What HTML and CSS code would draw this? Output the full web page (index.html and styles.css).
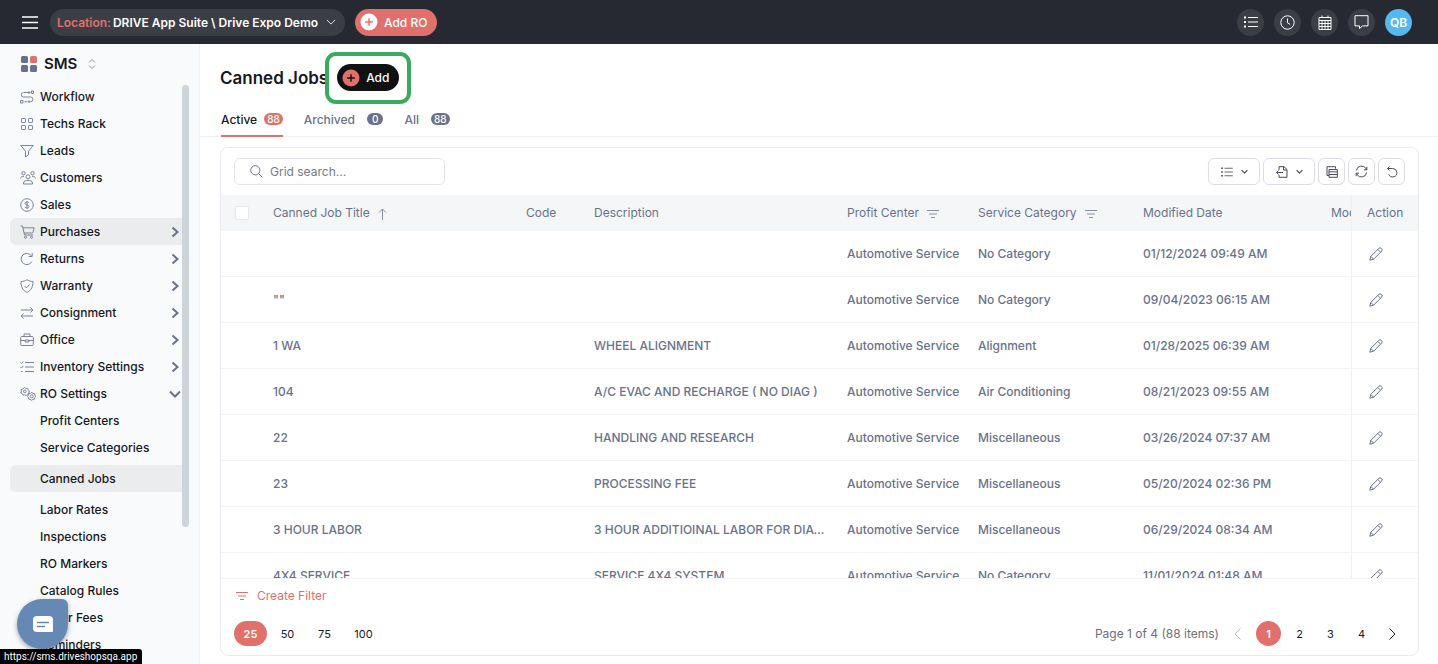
FILE: index.html
```html
<!DOCTYPE html>
<html lang="en">
<head>
    <meta charset="UTF-8">
    <meta name="viewport" content="width=device-width, initial-scale=1.0">
    <title>Canned Jobs</title>
    <link rel="stylesheet" href="styles.css">
</head>
<body>
    <!-- icons used more than once -->
    <svg class="sprite" width="0" height="0">
        <symbol id="right" viewBox="0 0 12 12"><path d="M3.500 1.500L8.500 6l-5 4.500"/></symbol>
        <symbol id="down" viewBox="0 0 12 12"><path d="M1 3.500L6 8.500l5-5"/></symbol>
        <symbol id="filter" viewBox="0 0 12 12"><path d="M0 2.500h12M2 6h8M4 9.500h4"/></symbol>
        <symbol id="list" viewBox="0 0 14 12"><path d="M4 1.500h10M4 6h10M4 10.500h10"/><path stroke-width="2" d="M0 1.500h2M0 6h2M0 10.500h2"/></symbol>
        <symbol id="pencil" viewBox="0 0 14 14"><path d="M.8 13.200l1-3.800L9.900 1.300a1.600 1.600 0 0 1 2.300 0l.5.500a1.600 1.600 0 0 1 0 2.300l-8.100 8.100zM8.800 2.400l2.800 2.800M1.800 9.400l2.800 2.800"/></symbol>
    </svg>

    <header class="topbar">
        <button class="menu-btn" aria-label="Menu"><svg width="16" height="13" viewBox="0 0 16 13"><path d="M0 1h16M0 6.500h16M0 12h16"/></svg></button>
        <button class="location"><span>Location:</span> DRIVE App Suite \ Drive Expo Demo <svg width="10" height="10"><use href="#down"/></svg></button>
        <button class="pill add-ro"><svg width="18" height="18" viewBox="0 0 18 18"><circle cx="9" cy="9" r="8.500"/><path d="M9 5.200v7.600M5.200 9h7.600"/></svg>Add RO</button>
        <div class="top-icons">
            <button class="round" aria-label="List"><svg width="14" height="12"><use href="#list"/></svg></button>
            <button class="round" aria-label="Clock"><svg width="15" height="15" viewBox="0 0 15 15"><circle cx="7.500" cy="7.500" r="6.700"/><path d="M7.500 3.500v4.300l2.600 1.600"/></svg></button>
            <button class="round" aria-label="Calendar"><svg width="14" height="15" viewBox="0 0 14 15"><path d="M1 2.500h12v12H1zM1 5.500h12M1 8.500h12M1 11.500h12M4 5.500v9M7 5.500v9M10 5.500v9M4 .5v2M10 .5v2"/></svg></button>
            <button class="round" aria-label="Messages"><svg width="15" height="14" viewBox="0 0 15 14"><path d="M1 .7h13v10.200H8.500l-3 2.600v-2.600H1z"/></svg></button>
            <button class="round avatar">QB</button>
        </div>
    </header>

    <div class="layout">
        <aside class="sidebar">
            <button class="app-switch">
                <svg class="app-logo" width="16" height="16" viewBox="0 0 16 16"><rect width="7" height="7" rx="1.500"/><rect class="red" x="9" width="7" height="7" rx="1.500"/><rect y="9" width="7" height="7" rx="1.500"/><rect x="9" y="9" width="7" height="7" rx="1.500"/></svg>
                SMS
                <svg class="sort" width="8" height="10" viewBox="0 0 8 10"><path d="M1 3.500l3-3 3 3M1 6.500l3 3 3-3"/></svg>
            </button>
            <div class="nav-scroll">
                <nav>
                    <a href="#"><svg width="14" height="14" viewBox="0 0 14 14"><path d="M4 2.500h6M8.500 1l1.500 1.500L8.500 4M11.500 1h2v2.500h-2zM3.500 2.500a2.200 2.200 0 0 0 0 4.500h7a2.200 2.200 0 0 1 0 4.700H8M9 10.500v2.500M.5 10.500H3V13H.5zM4.500 11.700h3"/></svg>Workflow</a>
                    <a href="#"><svg width="14" height="14" viewBox="0 0 14 14"><rect x="1.500" y="1.500" width="4" height="4" rx=".6"/><rect x="8.500" y="1.500" width="4" height="4" rx=".6"/><rect x="1.500" y="8.500" width="4" height="4" rx=".6"/><rect x="8.500" y="8.500" width="4" height="4" rx=".6"/></svg>Techs Rack</a>
                    <a href="#"><svg width="14" height="14" viewBox="0 0 14 14"><path d="M.8 1.500h12.400L8.500 7.300v3.400l-3 2.300V7.300z"/></svg>Leads</a>
                    <a href="#"><svg width="16" height="14" viewBox="0 0 16 14"><circle cx="8" cy="5.800" r="2"/><circle cx="3.500" cy="2.200" r="1.700"/><circle cx="12.500" cy="2.200" r="1.700"/><path d="M3.500 13v-1a3 3 0 0 1 3-2.500h3a3 3 0 0 1 3 2.500v1zM.5 7.500a2.500 2.500 0 0 1 3.500-2M15.500 7.500a2.500 2.500 0 0 0-3.500-2"/></svg>Customers</a>
                    <a href="#"><svg width="14" height="14" viewBox="0 0 14 14"><circle cx="7" cy="7" r="6.300"/><path d="M9 5.200C8.700 4.300 7.900 4 7 4c-1.100 0-2 .5-2 1.400C5 7.500 9 6.400 9 8.600 9 9.500 8.100 10 7 10s-1.800-.4-2.100-1.200M7 3v8"/></svg>Sales</a>
                    <a href="#" class="current"><svg width="15" height="14" viewBox="0 0 15 14"><path d="M.5 1h2l2 9h8.500M2.800 2.800h11.400l-1.500 5.200H4"/><circle cx="5.500" cy="12.300" r="1"/><circle cx="11.500" cy="12.300" r="1"/></svg>Purchases<svg class="arrow" width="12" height="12"><use href="#right"/></svg></a>
                    <a href="#"><svg width="14" height="14" viewBox="0 0 14 14"><path d="M11.800 9.500A5.600 5.600 0 1 1 11.500 4M12.200 1v3.500H8.700"/></svg>Returns<svg class="arrow" width="12" height="12"><use href="#right"/></svg></a>
                    <a href="#"><svg width="14" height="14" viewBox="0 0 14 14"><path d="M7 .7c2 1.300 3.800 1.700 6 1.800.1 4.700-1.500 8.800-6 10.900C2.500 11.300.9 7.200 1 2.500 3.200 2.400 5 2 7 .7zM4.500 7l1.900 1.900 3.400-3.600"/></svg>Warranty<svg class="arrow" width="12" height="12"><use href="#right"/></svg></a>
                    <a href="#"><svg width="14" height="14" viewBox="0 0 14 14"><path d="M1 4h12M10.500 1.500L13 4l-2.500 2.500M13 10H1M3.500 7.500L1 10l2.500 2.500"/></svg>Consignment<svg class="arrow" width="12" height="12"><use href="#right"/></svg></a>
                    <a href="#"><svg width="14" height="14" viewBox="0 0 14 14"><rect x=".7" y="3.500" width="12.600" height="9" rx="1"/><path d="M4 3.500V1h6v2.500M.7 7.500h4.500M8.800 7.500h4.500M5.200 7v2h3.600V7z"/></svg>Office<svg class="arrow" width="12" height="12"><use href="#right"/></svg></a>
                    <a href="#"><svg width="14" height="14" viewBox="0 0 14 14"><path d="M5 2.500h9M5 7h9M5 11.500h9M.5 2.500l1 1 1.800-2M.5 7l1 1 1.800-2M1 11.500h1.500"/></svg>Inventory Settings<svg class="arrow" width="12" height="12"><use href="#right"/></svg></a>
                    <a href="#"><svg width="16" height="14" viewBox="0 0 16 14"><path d="M4.500.5l1.300 1 1.700-.2.600 1.500 1.300 1-.6 1.400.1 1.600-1.600.5-1 1.200-1.600-.7-1.600.3-.8-1.400L.8 5.900l.5-1.600-.3-1.600 1.600-.6z"/><circle cx="4.800" cy="4.300" r="1.300"/><path d="M11.500 5.500l1.500.8 1.600.1.200 1.600 1 1.300-1 1.300-.3 1.600-1.600.2-1.400.9-1.300-1-1.600-.2-.2-1.600-.9-1.300 1-1.300.2-1.500 1.600-.1z"/><circle cx="11.700" cy="9.300" r="1.500"/></svg>RO Settings<svg class="arrow" width="12" height="12"><use href="#down"/></svg></a>
                    <div class="subnav">
                        <a href="#">Profit Centers</a>
                        <a href="#">Service Categories</a>
                        <a href="#" class="current">Canned Jobs</a>
                        <a href="#">Labor Rates</a>
                        <a href="#">Inspections</a>
                        <a href="#">RO Markers</a>
                        <a href="#">Catalog Rules</a>
                        <a href="#">Order Fees</a>
                        <a href="#">Reminders</a>
                    </div>
                </nav>
                <div class="thumb"></div>
            </div>
        </aside>

        <main>
            <div class="page-head">
                <h1>Canned Jobs</h1>
                <div class="highlight"><button class="pill add"><svg width="18" height="18" viewBox="0 0 18 18"><circle cx="9" cy="9" r="8.500"/><path d="M9 5.200v7.600M5.200 9h7.600"/></svg>Add</button></div>
            </div>
            <div class="tabs">
                <button class="tab active">Active <span>88</span></button>
                <button class="tab archived">Archived <span>0</span></button>
                <button class="tab all">All <span>88</span></button>
            </div>

            <section class="card">
                <div class="toolbar">
                    <label class="search">
                        <svg width="13" height="13" viewBox="0 0 13 13"><circle cx="5.300" cy="5.300" r="4.600"/><path d="M8.700 8.700l3.800 3.800"/></svg>
                        <input type="text" placeholder="Grid search..." aria-label="Grid search">
                    </label>
                    <div class="tools">
                        <button class="wide" aria-label="Layout"><svg width="12" height="10"><use href="#list"/></svg><svg class="caret" width="7" height="7"><use href="#down"/></svg></button>
                        <button class="wide" aria-label="Export"><svg width="12" height="12" viewBox="0 0 12 12"><path d="M3 4V.7h5L11 3.500v7.800H3V9M7.500.7V4H11M7 6.500H.5M2.500 4.500l-2 2 2 2"/></svg><svg class="caret" width="7" height="7"><use href="#down"/></svg></button>
                        <button aria-label="Columns"><svg width="12" height="12" viewBox="0 0 12 12"><path d="M3 9.500H1V.7h8.500v2M3 3.500h8.300v7.800H3zM3 5.800h8.300M3 8.500h8.300"/></svg></button>
                        <button aria-label="Refresh"><svg width="13" height="13" viewBox="0 0 13 13"><path d="M1.300 5.500A5.300 5.300 0 0 1 11 3.500l.7 1.300M11.900 1.800v3H9M11.700 7.500A5.300 5.300 0 0 1 2 9.500l-.7-1.300M1.100 11.200v-3H4"/></svg></button>
                        <button aria-label="Reset"><svg width="12" height="12" viewBox="0 0 12 12"><path d="M1.500 2.500h5.200a4.200 4.200 0 1 1-3.900 5.800M3.500.5l-2 2 2 2"/></svg></button>
                    </div>
                </div>

                <div class="grid">
                    <table>
                        <colgroup>
                            <col class="c-check"><col><col class="c-code"><col><col class="c-profit"><col class="c-category"><col class="c-date"><col class="c-by"><col class="c-action">
                        </colgroup>
                        <thead>
                            <tr>
                                <th class="check"><input type="checkbox" aria-label="Select all"></th>
                                <th>Canned Job Title <svg class="sorted" width="9" height="12" viewBox="0 0 9 12"><path d="M4.500 12V1M1 4.500L4.500 1 8 4.500"/></svg></th>
                                <th>Code</th>
                                <th>Description</th>
                                <th>Profit Center <svg width="12" height="12"><use href="#filter"/></svg></th>
                                <th>Service Category <svg width="12" height="12"><use href="#filter"/></svg></th>
                                <th>Modified Date</th>
                                <th class="by">Modified By</th>
                                <th class="action">Action</th>
                            </tr>
                        </thead>
                        <tbody>
                            <tr><td></td><td></td><td></td><td></td><td>Automotive Service</td><td>No Category</td><td>01/12/2024 09:49 AM</td><td></td><td class="action"><button aria-label="Edit"><svg width="14" height="14"><use href="#pencil"/></svg></button></td></tr>
                            <tr><td></td><td>""</td><td></td><td></td><td>Automotive Service</td><td>No Category</td><td>09/04/2023 06:15 AM</td><td></td><td class="action"><button aria-label="Edit"><svg width="14" height="14"><use href="#pencil"/></svg></button></td></tr>
                            <tr><td></td><td>1 WA</td><td></td><td>WHEEL ALIGNMENT</td><td>Automotive Service</td><td>Alignment</td><td>01/28/2025 06:39 AM</td><td></td><td class="action"><button aria-label="Edit"><svg width="14" height="14"><use href="#pencil"/></svg></button></td></tr>
                            <tr><td></td><td>104</td><td></td><td>A/C EVAC AND RECHARGE ( NO DIAG )</td><td>Automotive Service</td><td>Air Conditioning</td><td>08/21/2023 09:55 AM</td><td></td><td class="action"><button aria-label="Edit"><svg width="14" height="14"><use href="#pencil"/></svg></button></td></tr>
                            <tr><td></td><td>22</td><td></td><td>HANDLING AND RESEARCH</td><td>Automotive Service</td><td>Miscellaneous</td><td>03/26/2024 07:37 AM</td><td></td><td class="action"><button aria-label="Edit"><svg width="14" height="14"><use href="#pencil"/></svg></button></td></tr>
                            <tr><td></td><td>23</td><td></td><td>PROCESSING FEE</td><td>Automotive Service</td><td>Miscellaneous</td><td>05/20/2024 02:36 PM</td><td></td><td class="action"><button aria-label="Edit"><svg width="14" height="14"><use href="#pencil"/></svg></button></td></tr>
                            <tr><td></td><td>3 HOUR LABOR</td><td></td><td>3 HOUR ADDITIOINAL LABOR FOR DIAGNOSTICS</td><td>Automotive Service</td><td>Miscellaneous</td><td>06/29/2024 08:34 AM</td><td></td><td class="action"><button aria-label="Edit"><svg width="14" height="14"><use href="#pencil"/></svg></button></td></tr>
                            <tr><td></td><td>4X4 SERVICE</td><td></td><td>SERVICE 4X4 SYSTEM</td><td>Automotive Service</td><td>No Category</td><td>11/01/2024 01:48 AM</td><td></td><td class="action"><button aria-label="Edit"><svg width="14" height="14"><use href="#pencil"/></svg></button></td></tr>
                        </tbody>
                    </table>
                </div>

                <button class="create-filter"><svg width="12" height="12"><use href="#filter"/></svg>Create Filter</button>
                <div class="pager">
                    <div class="sizes">
                        <button class="selected">25</button>
                        <button>50</button>
                        <button>75</button>
                        <button>100</button>
                    </div>
                    <div class="pages">
                        <span>Page 1 of 4 (88 items)</span>
                        <button class="prev" aria-label="Previous"><svg width="7" height="12" viewBox="0 0 7 12"><path d="M6.500.5L1 6l5.500 5.500"/></svg></button>
                        <button class="selected">1</button>
                        <button>2</button>
                        <button>3</button>
                        <button>4</button>
                        <button class="next" aria-label="Next"><svg width="7" height="12" viewBox="0 0 7 12"><path d="M.5.500L6 6 .5 11.500"/></svg></button>
                    </div>
                </div>
            </section>
        </main>
    </div>

    <button class="chat" aria-label="Chat"><svg width="20" height="16" viewBox="0 0 20 16"><path class="bubble" d="M4 0h12a4 4 0 0 1 4 4v11a1 1 0 0 1-1 1H4a4 4 0 0 1-4-4V4a4 4 0 0 1 4-4z"/><path class="lines" d="M4 6.500h12M4 10.500h8"/></svg></button>
    <div class="status">https://sms.driveshopsqa.app</div>
</body>
</html>
```
FILE: styles.css
```css
/* Global styles */
* {
    box-sizing: border-box;
}
body {
    margin: 0;
    height: 100vh;
    display: flex;
    flex-direction: column;
    overflow: hidden;
    font-family: Inter, sans-serif;
    font-size: 12px;
    color: #16181d;
    background: #fff;
}
button {
    font: inherit;
    color: inherit;
    border: none;
    background: none;
    padding: 0;
    cursor: pointer;
}
svg {
    fill: none;
    stroke: currentColor;
    stroke-width: 1;
    flex-shrink: 0;
}
.sprite {
    position: absolute;
}

/* Top bar */
.topbar {
    display: flex;
    align-items: center;
    height: 44px;
    flex-shrink: 0;
    padding: 0 26px 0 22px;
    background: #272932;
    color: #fff;
}
.menu-btn {
    display: flex;
    margin-right: 12px;
}
.menu-btn svg {
    stroke-width: 1.5;
}
.location {
    display: flex;
    align-items: center;
    gap: 2px;
    height: 27px;
    padding: 0 9px 0 7px;
    margin-right: 10px;
    border-radius: 14px;
    background: #3c3e45;
    font-weight: 600;
}
.location span {
    color: #e0706b;
}
.location svg {
    margin-left: 6px;
}
.pill {
    display: flex;
    align-items: center;
    gap: 6px;
    height: 27px;
    padding: 0 10px 0 5px;
    border-radius: 14px;
    background: #e0706b;
    color: #fff;
    font-weight: 500;
}
.pill circle {
    fill: #fff;
    stroke: none;
}
.pill svg {
    stroke: #e0706b;
    stroke-width: 1.4;
}
.top-icons {
    display: flex;
    gap: 10px;
    margin-left: auto;
}
.round {
    display: flex;
    align-items: center;
    justify-content: center;
    width: 27px;
    height: 27px;
    border-radius: 50%;
    background: #3c3e45;
}
.avatar {
    background: #55b8ee;
    font-weight: 600;
}

/* Sidebar */
.layout {
    display: flex;
    flex: 1;
    min-height: 0;
}
.sidebar {
    display: flex;
    flex-direction: column;
    width: 200px;
    flex-shrink: 0;
    background: #f9fafc;
    border-right: 1px solid #eff0f3;
}
.app-switch {
    display: flex;
    align-items: center;
    gap: 7px;
    height: 39px;
    flex-shrink: 0;
    padding: 0 21px;
    font-size: 15px;
    font-weight: 600;
}
.app-logo rect {
    fill: #69728a;
    stroke: none;
}
.app-logo .red {
    fill: #e0706b;
}
.sort {
    margin-left: 4px;
    color: #8a90a0;
}
.nav-scroll {
    display: flex;
    flex: 1;
    min-height: 0;
    padding-right: 10px;
    overflow: hidden;
}
nav {
    flex: 1;
    padding-left: 10px;
}
nav a {
    display: flex;
    align-items: center;
    height: 27px;
    padding-left: 10px;
    border-radius: 6px 0 0 6px;
    color: inherit;
    text-decoration: none;
    font-weight: 500;
}
nav svg {
    margin-right: 6px;
    color: #7b8397;
}
nav svg[width="15"] {
    margin-right: 5px;
}
nav svg[width="16"] {
    margin-right: 4px;
}
nav .arrow {
    margin: 0 1px 0 auto;
    color: #69728a;
    stroke-width: 2;
}
nav .current {
    background: #ebecee;
}
.subnav a {
    padding-left: 30px;
}
.subnav .current {
    margin: 4px 0;
}
.thumb {
    width: 7px;
    height: 442px;
    margin-top: 2px;
    border-radius: 4px;
    background: #cfd3da;
}

/* Page header */
main {
    display: flex;
    flex: 1;
    flex-direction: column;
    min-width: 0;
}
.page-head {
    display: flex;
    align-items: center;
    gap: 9px;
    height: 39px;
    margin-top: 14px;
    padding-left: 20px;
    flex-shrink: 0;
}
h1 {
    margin: 0;
    font-size: 17px;
    font-weight: 600;
}
.highlight {
    position: relative;
}
.highlight::after {
    content: "";
    position: absolute;
    inset: -12px -12px -13px;
    border: 4px solid #3aab5d;
    border-radius: 11px;
    pointer-events: none;
}
.add {
    background: #111;
}
.add circle {
    fill: #e0706b;
}
.add svg {
    stroke: #111;
}
.tabs {
    display: flex;
    height: 40px;
    flex-shrink: 0;
    padding-left: 21px;
    gap: 21px;
    border-bottom: 1px solid #f0f1f4;
}
.tab {
    display: flex;
    align-items: center;
    gap: 7px;
    height: 40px;
    padding-top: 6px;
    font-weight: 500;
    color: #69728a;
    border-bottom: 2px solid transparent;
}
.tab span {
    padding: 0 3px;
    border-radius: 6px;
    background: #69728a;
    color: #fff;
    font-size: 10px;
    line-height: 12px;
}
.archived, .all {
    gap: 12px;
}
.archived span {
    padding: 0 5px;
}
.active {
    color: #16181d;
    border-color: #e0706b;
}
.active span {
    background: #e0706b;
}

/* Card */
.card {
    display: flex;
    flex: 1;
    flex-direction: column;
    min-height: 0;
    margin: 10px 19px 8px 20px;
    border: 1px solid #eaebf0;
    border-radius: 8px;
}
.toolbar {
    display: flex;
    align-items: center;
    justify-content: space-between;
    height: 47px;
    flex-shrink: 0;
    padding: 0 13px;
}
.search {
    display: flex;
    align-items: center;
    gap: 7px;
    width: 211px;
    height: 27px;
    padding: 0 15px;
    border: 1px solid #e3e4ec;
    border-radius: 6px;
    color: #69728a;
}
.search input {
    width: 100%;
    min-width: 0;
    padding: 0;
    border: none;
    outline: none;
    font: inherit;
    color: inherit;
    background: none;
}
.search input::placeholder {
    color: #747a88;
}
.tools {
    display: flex;
    gap: 3px;
}
.tools button {
    display: flex;
    align-items: center;
    justify-content: center;
    gap: 8px;
    width: 27px;
    height: 27px;
    border: 1px solid #dcdde7;
    border-radius: 6px;
    color: #4a4d57;
}
.tools .wide {
    width: 52px;
}
.tools .caret {
    stroke-width: 2;
}

/* Table */
.grid {
    flex: 1;
    min-height: 0;
    overflow: hidden;
    border-bottom: 1px solid #f3f4f6;
}
table {
    width: 100%;
    table-layout: fixed;
    border-collapse: separate;
    border-spacing: 0;
}
.c-check { width: 42px; }
.c-code { width: 68px; }
.c-profit { width: 131px; }
.c-category { width: 165px; }
.c-date { width: 188px; }
.c-by { width: 30px; }
.c-action { width: 67px; }
th, td {
    height: 46px;
    padding: 0 6px 0 10px;
    border-bottom: 1px solid #f3f4f6;
    text-align: left;
    white-space: nowrap;
    overflow: hidden;
    text-overflow: ellipsis;
    font-weight: 500;
    color: #69728a;
}
th {
    height: 36px;
    font-weight: 400;
    background: #f5f6f8;
}
th svg {
    margin-left: 5px;
    vertical-align: middle;
    color: #8a90a0;
}
th.by {
    padding-right: 0;
    text-overflow: clip;
}
.check {
    padding: 0 14px;
    text-overflow: clip;
}
.check input {
    display: block;
    appearance: none;
    width: 14px;
    height: 14px;
    margin: 0;
    border: 1px solid #e6e8ec;
    border-radius: 2px;
    background: #fff;
}
.action {
    padding: 0 0 0 15px;
    border-left: 1px solid #eff0f3;
}
.action button {
    display: block;
    padding: 2px;
}
.action svg {
    display: block;
}

/* Footer */
.create-filter {
    display: flex;
    align-items: center;
    gap: 9px;
    height: 33px;
    flex-shrink: 0;
    padding: 0 15px;
    color: #e0706b;
}
.pager {
    display: flex;
    align-items: center;
    justify-content: space-between;
    height: 43px;
    flex-shrink: 0;
    padding: 0 13px;
}
.sizes, .pages {
    display: flex;
    align-items: center;
    font-size: 11px;
}
.sizes {
    gap: 4px;
}
.pages {
    gap: 6px;
}
.pages span {
    color: #6d7078;
    font-size: 12px;
}
.pager button {
    display: flex;
    align-items: center;
    justify-content: center;
    height: 25px;
}
.sizes button {
    width: 33px;
}
.sizes button:last-child {
    width: 37px;
}
.pages button {
    width: 25px;
}
.pager .selected {
    border-radius: 13px;
    background: #e0706b;
    color: #fff;
    font-weight: 600;
}
.pages .prev {
    color: #b9bcc4;
}

/* Floating bits */
.chat {
    position: fixed;
    left: 17px;
    bottom: 15px;
    display: flex;
    align-items: center;
    justify-content: center;
    width: 51px;
    height: 50px;
    border-radius: 25px 6px 25px 25px;
    background: #6688b4;
    box-shadow: 0 2px 5px rgba(0, 0, 0, 0.35);
}
.bubble {
    fill: #fff;
    stroke: none;
}
.lines {
    stroke: #6688b4;
    stroke-width: 1.5;
}
.status {
    position: fixed;
    left: 0;
    bottom: 0;
    height: 15px;
    padding: 0 5px 0 4px;
    border-radius: 0 3px 0 0;
    background: #000;
    color: #fff;
    font-family: Roboto, sans-serif;
    font-size: 10px;
    line-height: 15px;
}
```
